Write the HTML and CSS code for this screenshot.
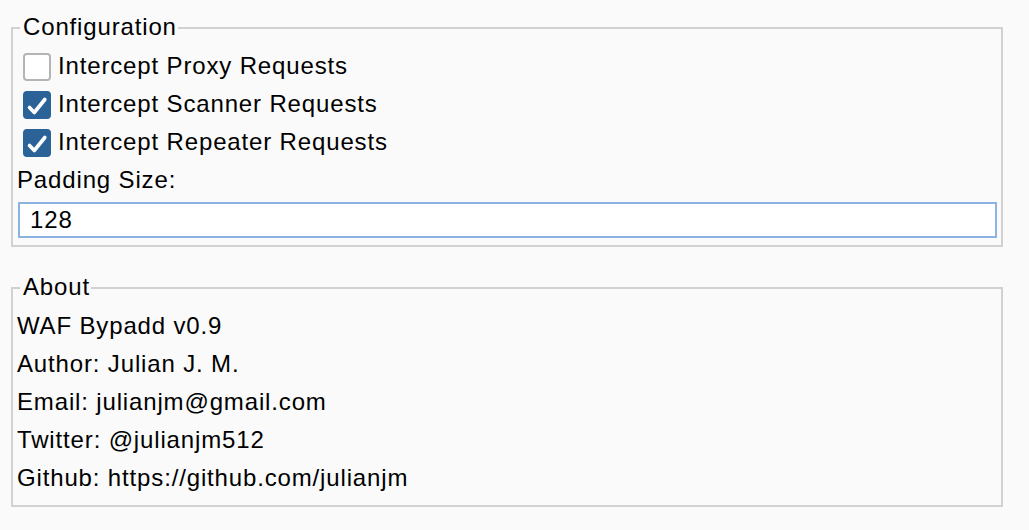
FILE: index.html
```html
<!DOCTYPE html>
<html lang="en">
<head>
<meta charset="utf-8">
<title>WAF Bypadd</title>
<link rel="stylesheet" href="styles.css">
</head>
<body>
<div class="panel">
  <fieldset class="group config">
    <legend class="group-title">Configuration</legend>
    <label class="check-row">
      <input type="checkbox" class="native">
      <span class="box"><svg viewBox="0 0 28 28" width="28" height="28"><path d="M6.5 16.5 L11.3 21.5 L21.8 8.5" /></svg></span>
      <span class="check-text">Intercept Proxy Requests</span>
    </label>
    <label class="check-row">
      <input type="checkbox" class="native" checked>
      <span class="box"><svg viewBox="0 0 28 28" width="28" height="28"><path d="M6.5 16.5 L11.3 21.5 L21.8 8.5" /></svg></span>
      <span class="check-text">Intercept Scanner Requests</span>
    </label>
    <label class="check-row">
      <input type="checkbox" class="native" checked>
      <span class="box"><svg viewBox="0 0 28 28" width="28" height="28"><path d="M6.5 16.5 L11.3 21.5 L21.8 8.5" /></svg></span>
      <span class="check-text">Intercept Repeater Requests</span>
    </label>
    <label class="field-label" for="padding">Padding Size:</label>
    <input id="padding" class="text-input" type="text" value="128">
  </fieldset>

  <fieldset class="group about">
    <legend class="group-title">About</legend>
    <div class="info-line">WAF Bypadd v0.9</div>
    <div class="info-line">Author: Julian J. M.</div>
    <div class="info-line">Email: julianjm@gmail.com</div>
    <div class="info-line">Twitter: @julianjm512</div>
    <div class="info-line">Github: https://github.com/julianjm</div>
  </fieldset>
</div>
</body>
</html>
```

FILE: styles.css
```css
html, body {
  margin: 0;
  padding: 0;
  background: #fafafa;
}

body {
  font-family: "Liberation Sans", Arial, sans-serif;
  font-size: 24px;
  letter-spacing: 0.85px;
  color: #000;
}

.panel {
  padding: 12px 26px 0 11px;
  display: flex;
  flex-direction: column;
}

.group {
  margin: 0;
  border: 2px solid #d1d1d1;
  padding: 3px 4px 7px 4px;
  min-width: 0;
  display: flex;
  flex-direction: column;
}

.about {
  margin-top: 25px;
  padding-bottom: 8px;
}

.group-title {
  font-size: 24px;
  line-height: 30px;
  padding: 0 1px 2px 3px;
  margin-left: 3px;
}

.check-row {
  display: flex;
  align-items: center;
  height: 38px;
  cursor: default;
}

.native {
  position: absolute;
  opacity: 0;
  width: 0;
  height: 0;
  margin: 0;
}

.box {
  box-sizing: border-box;
  width: 28px;
  height: 28px;
  margin: 2px 7px 0 6px;
  border: 2px solid #b4b4b4;
  border-radius: 4px;
  background: #fff;
  display: flex;
  align-items: center;
  justify-content: center;
  position: relative;
}

.box svg {
  position: absolute;
  left: -2px;
  top: -2px;
  display: none;
}

.box path {
  fill: none;
  stroke: #fff;
  stroke-width: 3.6;
  stroke-linecap: round;
  stroke-linejoin: round;
}

.native:checked + .box {
  background: #2b6298;
  border-color: #2b6298;
}

.native:checked + .box svg {
  display: block;
}

.check-text {
  line-height: 38px;
}

.field-label {
  display: block;
  line-height: 38px;
}

.text-input {
  box-sizing: border-box;
  margin: 3px 0 0 1px;
  height: 36px;
  border: 2px solid #8cb4e3;
  background: #fff;
  padding: 0 0 0 10px;
  font-family: "Liberation Sans", Arial, sans-serif;
  font-size: 24px;
  letter-spacing: 0.85px;
  color: #000;
  outline: none;
  border-radius: 0;
}

.info-line {
  line-height: 38px;
}
```
